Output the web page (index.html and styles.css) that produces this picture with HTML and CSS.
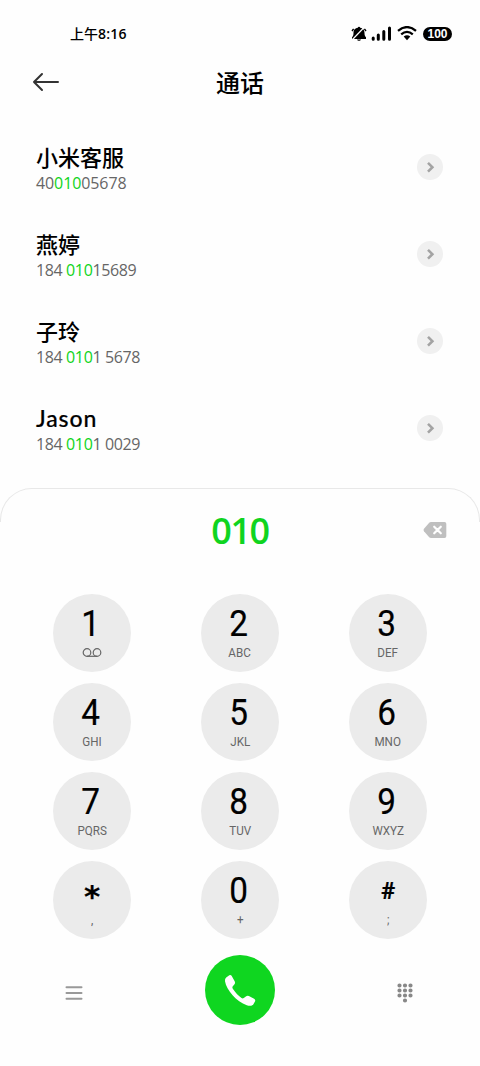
FILE: index.html
```html
<!DOCTYPE html>
<html lang="zh-CN">
<head>
<meta charset="utf-8">
<title>通话</title>
<link rel="stylesheet" href="styles.css">
</head>
<body>
<main class="screen">
  <div class="status">
    <span class="time">上午<b>8:16</b></span>
    <div class="indicators">
      <svg class="mute" width="16" height="16" viewBox="0 0 16 16"><path d="M8 .8a1.300 1.300 0 0 1 1.200 1C12.500 2.300 13.500 4.500 13.500 7c0 2.300.4 3.200 1.500 4.200V13H1v-1.800C2.100 10.200 2.500 9.300 2.500 7c0-2.500 1-4.700 4.300-5.200A1.300 1.300 0 0 1 8 .8ZM6 13.500h4c-.4 1.800-3.600 1.800-4 0Z"/><path d="M1 5 2.600 2.800M15 5 13.400 2.800" stroke="#000" stroke-width="1.400"/><path d="M1.500 13.500 13.500 1" stroke="#fff" stroke-width="1.200"/></svg>
      <svg class="signal" width="21" height="15" viewBox="0 0 21 15"><path d="M2.200 12v1.300M7.300 9v4.300M12.800 5.500v7.800M18.500 2v11.300" stroke="#000" stroke-width="3" stroke-linecap="round"/></svg>
      <svg class="wifi" width="20" height="15" viewBox="0 0 20 15"><g fill="none" stroke="#000" stroke-width="2.300"><path d="M1 4.800Q10-2.600 19 4.800"/><path d="M4.200 8.300Q10 3.400 15.800 8.300"/></g><path d="M6.700 10.500Q10 7.800 13.300 10.500L10 14.300Z"/></svg>
      <span class="battery">100</span>
    </div>
  </div>
  <header class="header">
    <svg class="back" width="28" height="20" viewBox="0 0 28 20"><path d="M10 2 2 10l8 8M2 10h24" fill="none" stroke="#333" stroke-width="2" stroke-linecap="round" stroke-linejoin="round"/></svg>
    <h1>通话</h1>
  </header>
  <ul class="contacts">
    <li><div><h2>小米客服</h2><p class="full">40<em>010</em>05678</p></div><span class="more"><svg width="26" height="26" viewBox="0 0 26 26"><path d="m11 8.800 4.400 4.400L11 17.600"/></svg></span></li>
    <li><div><h2>燕婷</h2><p>184 <em>010</em>15689</p></div><span class="more"><svg width="26" height="26" viewBox="0 0 26 26"><path d="m11 8.800 4.400 4.400L11 17.600"/></svg></span></li>
    <li><div><h2>子玲</h2><p>184 <em>010</em>1 5678</p></div><span class="more"><svg width="26" height="26" viewBox="0 0 26 26"><path d="m11 8.800 4.400 4.400L11 17.600"/></svg></span></li>
    <li><div><h2 class="latin">Jason</h2><p>184 <em>010</em>1 0029</p></div><span class="more"><svg width="26" height="26" viewBox="0 0 26 26"><path d="m11 8.800 4.400 4.400L11 17.600"/></svg></span></li>
  </ul>
  <section class="dialer">
    <div class="entry">
      <span class="number">010</span>
      <svg class="erase" width="24" height="18" viewBox="0 0 24 18"><path d="M8 1h13.500Q23.300 1 23.300 2.800v12.400q0 1.800-1.800 1.800H8q-1 0-1.800-.8L1 10.200Q0 9 1 7.800l5.200-6Q7 1 8 1Z" fill="#bfbfbf"/><path d="m11.200 5.700 6.600 6.600m0-6.600-6.600 6.600" stroke="#fff" stroke-width="2.200" stroke-linecap="round"/></svg>
    </div>
    <div class="keys">
      <button class="key"><b>1</b><svg class="voicemail" width="20" height="10" viewBox="0 0 20 10"><g fill="none" stroke="#666" stroke-width="1.200"><circle cx="5" cy="4.500" r="3.800"/><circle cx="15" cy="4.500" r="3.800"/><path d="M5 8.300h10"/></g></svg></button>
      <button class="key"><b>2</b><small>ABC</small></button>
      <button class="key"><b>3</b><small>DEF</small></button>
      <button class="key"><b>4</b><small>GHI</small></button>
      <button class="key"><b>5</b><small>JKL</small></button>
      <button class="key"><b>6</b><small>MNO</small></button>
      <button class="key"><b>7</b><small>PQRS</small></button>
      <button class="key"><b>8</b><small>TUV</small></button>
      <button class="key"><b>9</b><small>WXYZ</small></button>
      <button class="key"><b class="star">*</b><small>,</small></button>
      <button class="key"><b>0</b><small>+</small></button>
      <button class="key"><b class="hash">#</b><small>;</small></button>
    </div>
    <div class="actions">
      <svg class="menu" width="18" height="16" viewBox="0 0 18 16"><path d="M1.500 2.200h15M1.500 8h15M1.500 13.800h15" stroke="#999" stroke-width="2" stroke-linecap="round"/></svg>
      <button class="call"><svg width="70" height="70" viewBox="0 0 70 70"><path d="M21.200 22.500 24.300 20.200Q25.700 19.400 26.600 20.800L29.800 26.500Q30.600 28 29.500 29.200L27.600 31.500Q27 32.500 27.800 33.800C30.600 38 33 40.200 36.500 43Q37.700 43.900 38.800 43L41.200 41.200Q42.400 40.200 43.900 41L49.100 43.700Q50.700 44.600 50.100 46.200L48.700 48.800C47.600 51 44.900 51.300 41.800 50.200C31.500 46.700 21.500 35 20 26.200Q19.700 23.800 21.200 22.500Z" fill="#fff"/></svg></button>
      <svg class="pad" width="16" height="20" viewBox="0 0 16 20"><path d="M2.500 2.500h0m5.500 0h0m5.500 0h0M2.500 7.500h0m5.500 0h0m5.500 0h0M2.500 12.500h0m5.500 0h0m5.500 0h0M8 17.500h0" stroke="#888" stroke-width="4.200" stroke-linecap="round"/></svg>
    </div>
  </section>
</main>
</body>
</html>
```
FILE: styles.css
```css
* { box-sizing: border-box; margin: 0; padding: 0; }
body { background: #fefefe; color: #000; font-family: "Open Sans", "Noto Sans CJK SC", sans-serif; }
svg { display: block; }
button { border: 0; font: inherit; color: inherit; }
.screen { width: 480px; height: 1066px; display: flex; flex-direction: column; overflow: hidden; }

.status { height: 56px; padding: 11px 28px 0 70px; display: flex; justify-content: space-between; align-items: center; }
.time { font: 500 14px/20px "Noto Sans CJK SC", sans-serif; }
.time b { font: 600 14px/20px "Open Sans", sans-serif; letter-spacing: .2px; }
.indicators { display: flex; align-items: center; }
.signal { margin-left: 4px; }
.wifi { margin-left: 5px; }
.battery { width: 29px; height: 14px; margin-left: 6px; border-radius: 7px; background: #000; color: #fff; font: 700 12px/14px "Liberation Sans", sans-serif; text-align: center; }

.header { height: 52px; padding: 0 32px; display: grid; grid-template-columns: 28px 1fr 28px; align-items: center; }
.header h1 { font: 500 24px/36px "Noto Sans CJK SC", sans-serif; text-align: center; }

.contacts { height: 380px; padding: 34px 37px 0 36px; list-style: none; }
.contacts li { height: 87px; display: flex; justify-content: space-between; }
.contacts h2 { height: 30px; font: 500 22px/29px "Noto Sans CJK SC", sans-serif; }
.contacts .latin { font: 500 23px/30px Lato, sans-serif; letter-spacing: .9px; -webkit-text-stroke: .2px #000; }
.contacts p { font-size: 16px; line-height: 22px; color: #666; letter-spacing: -.38px; }
.contacts .full { letter-spacing: -.1px; }
.contacts em { font-style: normal; color: #0fd420; }
.more { width: 26px; height: 26px; margin-top: 12px; border-radius: 50%; background: #f0f0f0; }
.more path { fill: none; stroke: #a3a3a3; stroke-width: 2.6; }

.dialer { position: relative; height: 578px; padding-top: 1px; }
.dialer::before { content: ""; position: absolute; inset: 0 0 auto; height: 33px; border: 1px solid #e8e8e8; border-bottom: 0; border-radius: 32px 32px 0 0; pointer-events: none; }
.entry { height: 105px; padding: 0 33px; display: grid; grid-template-columns: 24px 1fr 24px; }
.number { grid-column: 2; font-weight: 600; font-size: 36px; line-height: 50px; margin-top: 17px; text-align: center; letter-spacing: -1.5px; color: #0fd420; }
.erase { margin-top: 32px; }
.keys { padding: 0 53px; display: grid; grid-template-columns: repeat(3, 78px); justify-content: space-between; row-gap: 11px; }
.key { width: 78px; height: 78px; border-radius: 50%; background: #ebebeb; display: flex; flex-direction: column; align-items: center; }
.key b { height: 38px; margin-top: 11px; padding-right: 3px; font: 400 37px/38px Roboto, sans-serif; transform: scaleX(.9); -webkit-text-stroke: .2px #000; }
.key small { margin-top: 3px; font: 400 12px/14px Roboto, sans-serif; color: #666; transform: scaleX(.97); }
.voicemail { margin-top: 5px; }
.key .star { padding: 0; font: 700 31px/48px "DejaVu Sans", sans-serif; transform: none; }
.key .hash { padding: 0; font-size: 24px; font-weight: 700; transform: none; }
.actions { padding: 16px 67px 0 65px; display: flex; justify-content: space-between; }
.menu { margin-top: 30px; }
.call { width: 70px; height: 70px; border-radius: 50%; background: #0fd620; }
.pad { margin-top: 28px; }
```
